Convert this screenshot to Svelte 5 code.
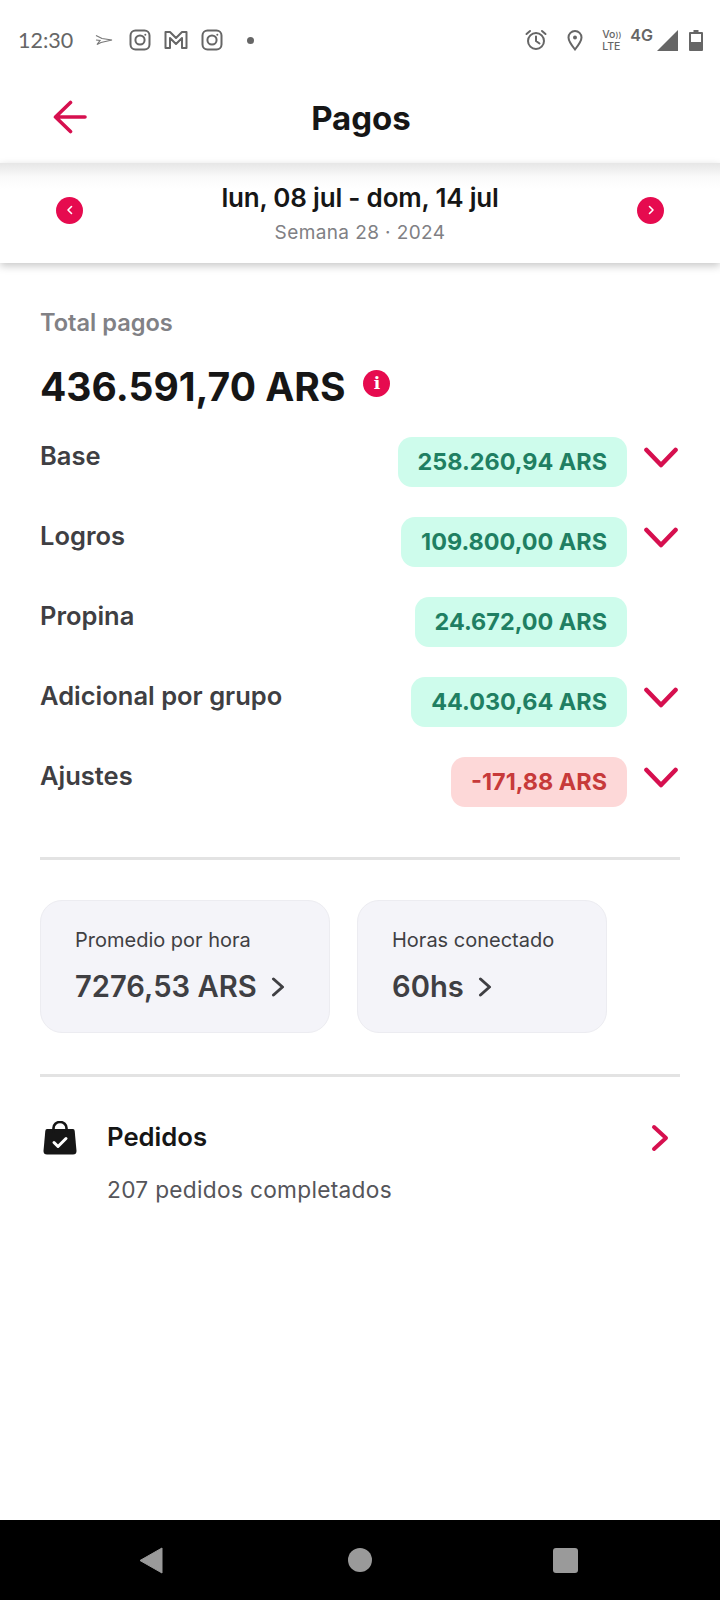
<script lang="ts">
	const rows = [
		{ label: 'Base', value: '258.260,94 ARS', more: true },
		{ label: 'Logros', value: '109.800,00 ARS', more: true },
		{ label: 'Propina', value: '24.672,00 ARS', more: false },
		{ label: 'Adicional por grupo', value: '44.030,64 ARS', more: true },
		{ label: 'Ajustes', value: '-171,88 ARS', more: true, negative: true }
	];
	const stats = [
		{ label: 'Promedio por hora', value: '7276,53 ARS', width: 290 },
		{ label: 'Horas conectado', value: '60hs', width: 250 }
	];
</script>

{#snippet insta()}
	<svg class="ic" width="24" height="24" viewBox="0 0 24 24" fill="none" stroke="#666" stroke-width="2">
		<rect x="2.5" y="2.5" width="19" height="19" rx="5" />
		<circle cx="12" cy="12" r="4.6" />
		<circle cx="17.3" cy="6.7" r="1" fill="#666" stroke="none" />
	</svg>
{/snippet}

<div class="page">
	<div class="status">
		<span class="time">12:30</span>
		<svg class="plane" width="18" height="12" viewBox="0 0 18 12" fill="none" stroke="#777" stroke-width="1.2">
			<path d="M1 1.5 L7 4.5 L17 6 L6 8.5 L2 10.5 L5 6.5 L1 6" />
		</svg>
		{@render insta()}
		<svg class="ic" width="24" height="20" viewBox="0 0 24 20" fill="none" stroke="#666" stroke-width="2" stroke-linejoin="round">
			<path d="M1.5 2 H6 L12 8 L18 2 H22.5 V18 H18 V8 L12 14 L6 8 V18 H1.5 Z" />
		</svg>
		{@render insta()}
		<span class="dot"></span>
		<span class="spacer"></span>
		<svg width="24" height="24" viewBox="0 0 24 24" fill="none" stroke="#666" stroke-width="2" stroke-linecap="round">
			<circle cx="12" cy="13" r="8" />
			<path d="M12 8.5 V13 L15.5 15.5 M2.5 6 L6 3 M21.5 6 L18 3" />
		</svg>
		<svg class="pin" width="18" height="22" viewBox="0 0 18 22" fill="none" stroke="#666" stroke-width="2">
			<path d="M9 20.5 C5 15.5 2.5 12 2.5 8.5 A6.5 6.5 0 0 1 15.5 8.5 C15.5 12 13 15.5 9 20.5 Z" />
			<circle cx="9" cy="8.5" r="2" fill="#666" stroke="none" />
		</svg>
		<span class="volte"><span>Vo<small>))</small></span><span>LTE</span></span>
		<span class="net">4G</span>
		<svg class="signal" width="21" height="21" viewBox="0 0 21 21"><path d="M21 0 V21 H0 Z" fill="#666" /></svg>
		<svg class="battery" width="14" height="21" viewBox="0 0 14 21">
			<path d="M4.5 0 H9.5 V2 H13 Q14 2 14 3 V20 Q14 21 13 21 H1 Q0 21 0 20 V3 Q0 2 1 2 H4.5 Z" fill="#666" />
			<rect x="2" y="4" width="10" height="8" fill="#fff" />
		</svg>
	</div>

	<header class="top">
		<svg class="back" width="34" height="34" viewBox="0 0 34 34" fill="none" stroke="#d6104f" stroke-width="3.6" stroke-linecap="round" stroke-linejoin="round">
			<path d="M2.5 17 H32 M17.5 2.5 L2.5 17 L17.5 31.5" />
		</svg>
		<h1>Pagos</h1>
	</header>

	<div class="week">
		<button class="round" aria-label="Semana anterior">
			<svg width="12" height="12" viewBox="0 0 12 12" fill="none" stroke="#fff" stroke-width="1.6" stroke-linecap="round" stroke-linejoin="round"><path d="M7.5 2.5 L4 6 L7.5 9.5" /></svg>
		</button>
		<div class="range">
			<strong>lun, 08 jul - dom, 14 jul</strong>
			<span>Semana 28 · 2024</span>
		</div>
		<button class="round" aria-label="Semana siguiente">
			<svg width="12" height="12" viewBox="0 0 12 12" fill="none" stroke="#fff" stroke-width="1.6" stroke-linecap="round" stroke-linejoin="round"><path d="M4.5 2.5 L8 6 L4.5 9.5" /></svg>
		</button>
	</div>

	<main class="content">
		<h2>Total pagos</h2>
		<div class="total">
			<span>436.591,70 ARS</span>
			<span class="info">i</span>
		</div>

		<ul class="rows">
			{#each rows as row}
				<li>
					<span class="label">{row.label}</span>
					<span class="pill" class:negative={row.negative}>{row.value}</span>
					<span class="chev">
						{#if row.more}
							<svg width="34" height="22" viewBox="0 0 34 22" fill="none" stroke="#d6104f" stroke-width="4.6" stroke-linecap="round" stroke-linejoin="round"><path d="M2.5 3 L17 18 L31.5 3" /></svg>
						{/if}
					</span>
				</li>
			{/each}
		</ul>

		<hr class="first" />

		<div class="stats">
			{#each stats as stat}
				<div class="stat" style="width: {stat.width}px">
					<span class="stat-label">{stat.label}</span>
					<span class="stat-value">
						{stat.value}
						<svg width="14" height="20" viewBox="0 0 14 20" fill="none" stroke="#3f3f43" stroke-width="3" stroke-linecap="round" stroke-linejoin="round"><path d="M2.5 2 L11.5 10 L2.5 18" /></svg>
					</span>
				</div>
			{/each}
		</div>

		<hr class="second" />

		<div class="orders">
			<svg class="bag" width="34" height="34" viewBox="0 0 34 34">
				<path d="M4 8 H30 Q31.5 8 31.7 10 L33.5 30 Q33.5 33.5 30 33.5 H4 Q0.5 33.5 0.5 30 L2.3 10 Q2.5 8 4 8 Z" fill="#161616" />
				<path d="M10.5 12 V7 A6.5 6 0 0 1 23.5 7 V12" fill="none" stroke="#161616" stroke-width="2.6" />
				<path d="M11 21.5 L15 25.5 L23 17.5" fill="none" stroke="#fff" stroke-width="3" stroke-linecap="round" stroke-linejoin="round" />
			</svg>
			<div class="orders-text">
				<strong>Pedidos</strong>
				<span>207 pedidos completados</span>
			</div>
			<svg class="go" width="18" height="28" viewBox="0 0 18 28" fill="none" stroke="#d6104f" stroke-width="4" stroke-linecap="round" stroke-linejoin="round"><path d="M3 3 L15 14 L3 25" /></svg>
		</div>
	</main>

	<nav class="nav">
		<svg width="24" height="27" viewBox="0 0 24 27"><path d="M23 1 V26 L1 13.5 Z" fill="#9a9a9a" stroke="#9a9a9a" stroke-linejoin="round" /></svg>
		<span class="home"></span>
		<span class="square"></span>
	</nav>
</div>

<style>
	:global(body) {
		background: #fff;
	}

	.page {
		height: 1600px;
		display: flex;
		flex-direction: column;
		font-family: Inter, 'Liberation Sans', sans-serif;
		color: #161616;
		background: #fff;
		overflow: hidden;
	}

	.status {
		height: 70px;
		padding: 10px 17px 0 18px;
		box-sizing: border-box;
		display: flex;
		align-items: center;
		gap: 12px;
		color: #666;
	}

	.time {
		font-family: Lato, sans-serif;
		font-size: 21.5px;
		margin-right: 10px;
	}

	.plane {
		margin-right: 3px;
	}

	.dot {
		width: 7px;
		height: 7px;
		border-radius: 50%;
		background: #666;
		margin-left: 11px;
	}

	.spacer {
		flex: 1;
	}

	.pin {
		margin-left: 6px;
	}

	.volte {
		display: flex;
		flex-direction: column;
		font-size: 10.5px;
		line-height: 11px;
		font-weight: 500;
		margin-left: 6px;
		margin-right: -3px;
	}

	.volte small {
		font-size: 8px;
	}

	.net {
		font-size: 16px;
		line-height: 18px;
		font-weight: 600;
		align-self: flex-start;
		margin-top: 16px;
		margin-right: -10px;
	}

	.signal {
		margin-left: 2px;
	}

	.battery {
		margin-left: -1px;
	}

	.top {
		height: 93px;
		padding: 2px 0 0 2px;
		box-sizing: border-box;
		position: relative;
		display: flex;
		align-items: center;
		justify-content: center;
	}

	.back {
		position: absolute;
		left: 53px;
		top: 30px;
	}

	h1 {
		margin: 0;
		font-size: 33px;
		font-weight: 700;
	}

	.week {
		height: 100px;
		box-sizing: border-box;
		padding: 0 56px;
		display: flex;
		align-items: center;
		justify-content: space-between;
		background: linear-gradient(#e6e6e6, #fafafa 14px, #fff 26px);
		box-shadow: 0 3px 8px rgba(0, 0, 0, 0.22);
	}

	.round {
		width: 27px;
		height: 27px;
		padding: 0;
		border: none;
		border-radius: 50%;
		background: #e60b4f;
		display: flex;
		align-items: center;
		justify-content: center;
		margin-top: -6px;
	}

	.range {
		display: flex;
		flex-direction: column;
		align-items: center;
		gap: 8px;
	}

	.range strong {
		font-size: 26px;
		font-weight: 600;
		letter-spacing: -0.2px;
		margin-top: -1px;
	}

	.range span {
		font-size: 19px;
		color: #808084;
		letter-spacing: 0.4px;
	}

	.content {
		flex: 1;
		padding: 0 40px;
		display: flex;
		flex-direction: column;
	}

	h2 {
		margin: 46px 0 0;
		font-size: 23.6px;
		line-height: 28px;
		font-weight: 600;
		color: #818185;
	}

	.total {
		margin-top: 25px;
		display: flex;
		align-items: center;
		gap: 18px;
		font-size: 39px;
		line-height: 50px;
		font-weight: 700;
	}

	.info {
		width: 27px;
		height: 27px;
		border-radius: 50%;
		background: #e60b4f;
		color: #fff;
		font-family: 'DejaVu Serif', serif;
		font-size: 17px;
		line-height: 27px;
		font-weight: 700;
		text-align: center;
		margin-top: -7px;
	}

	.rows {
		list-style: none;
		margin: 25px 0 0;
		padding: 0;
		display: flex;
		flex-direction: column;
		gap: 30px;
	}

	.rows li {
		height: 50px;
		display: flex;
		align-items: flex-start;
	}

	.label {
		flex: 1;
		font-size: 25.5px;
		line-height: 38px;
		font-weight: 600;
		color: #3f3f43;
	}

	.pill {
		height: 50px;
		padding: 0 20px;
		border-radius: 14px;
		background: #cefcec;
		color: #1f7f62;
		font-size: 23.4px;
		font-weight: 700;
		line-height: 50px;
	}

	.pill.negative {
		background: #fdd8d8;
		color: #c73a3a;
	}

	.chev {
		width: 53px;
		padding-top: 10px;
		padding-left: 17px;
		box-sizing: border-box;
		flex: none;
	}

	hr {
		width: 100%;
		height: 3px;
		margin: 0;
		border: none;
		background: #e3e3e3;
	}

	hr.first {
		margin-top: 50px;
	}

	hr.second {
		margin-top: 41px;
	}

	.stats {
		margin-top: 40px;
		display: flex;
		gap: 27px;
	}

	.stat {
		height: 133px;
		box-sizing: border-box;
		padding: 26px 34px 0;
		display: flex;
		flex-direction: column;
		gap: 14px;
		background: #f4f4f9;
		border: 1px solid #ececf1;
		border-radius: 22px;
	}

	.stat-label {
		font-size: 20px;
		line-height: 26px;
		color: #3f3f43;
	}

	.stat-value {
		display: flex;
		align-items: center;
		gap: 14px;
		font-size: 29.2px;
		line-height: 40px;
		font-weight: 600;
		color: #3f3f43;
	}

	.orders {
		margin-top: 44px;
		display: flex;
		align-items: flex-start;
	}

	.bag {
		margin-left: 3px;
		flex: none;
	}

	.orders-text {
		flex: 1;
		margin-left: 30px;
		display: flex;
		flex-direction: column;
		gap: 21px;
	}

	.orders-text strong {
		font-size: 25.7px;
		line-height: 32px;
		font-weight: 600;
	}

	.orders-text span {
		font-size: 22.7px;
		line-height: 32px;
		color: #55555a;
		letter-spacing: 0.3px;
	}

	.go {
		margin-right: 11px;
		margin-top: 3px;
	}

	.nav {
		height: 80px;
		background: #000;
		display: flex;
		align-items: center;
		justify-content: space-between;
		padding: 0 142px 0 139px;
		flex: none;
	}

	.home {
		width: 24px;
		height: 24px;
		margin-left: 4px;
		border-radius: 50%;
		background: #9a9a9a;
	}

	.square {
		width: 25px;
		height: 25px;
		border-radius: 3px;
		background: #9a9a9a;
	}
</style>
